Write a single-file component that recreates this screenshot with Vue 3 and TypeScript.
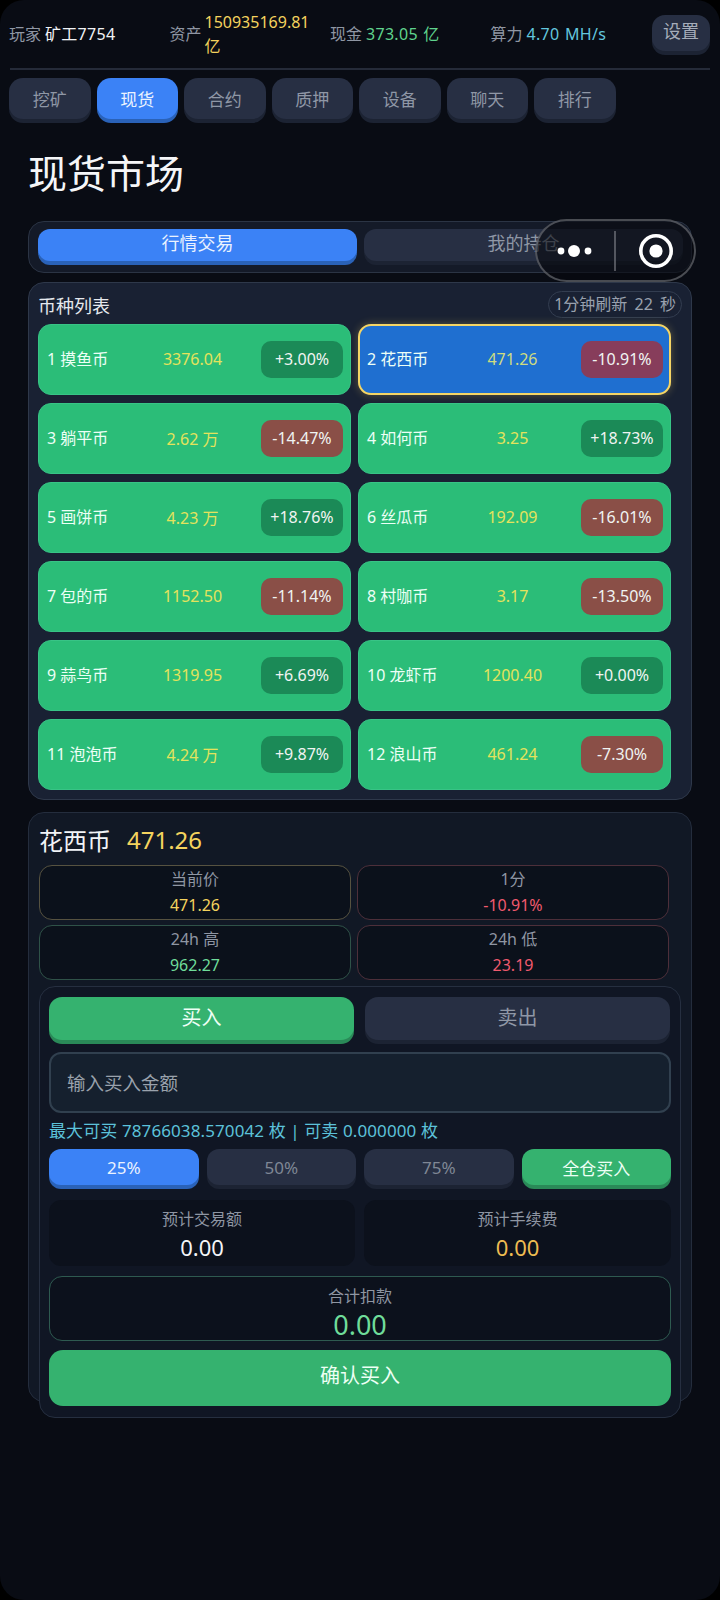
<script setup lang="ts">
import { ref } from "vue";

interface Coin {
    id: number;
    name: string;
    price: string;
    change: string;
}

const navs = ["挖矿", "现货", "合约", "质押", "设备", "聊天", "排行"];
const pcts = ["25%", "50%", "75%"];
const amount = ref("");

const coins: Coin[] = [
    { id: 1, name: "摸鱼币", price: "3376.04", change: "+3.00%" },
    { id: 2, name: "花西币", price: "471.26", change: "-10.91%" },
    { id: 3, name: "躺平币", price: "2.62 万", change: "-14.47%" },
    { id: 4, name: "如何币", price: "3.25", change: "+18.73%" },
    { id: 5, name: "画饼币", price: "4.23 万", change: "+18.76%" },
    { id: 6, name: "丝瓜币", price: "192.09", change: "-16.01%" },
    { id: 7, name: "包的币", price: "1152.50", change: "-11.14%" },
    { id: 8, name: "村咖币", price: "3.17", change: "-13.50%" },
    { id: 9, name: "蒜鸟币", price: "1319.95", change: "+6.69%" },
    { id: 10, name: "龙虾币", price: "1200.40", change: "+0.00%" },
    { id: 11, name: "泡泡币", price: "4.24 万", change: "+9.87%" },
    { id: 12, name: "浪山币", price: "461.24", change: "-7.30%" },
];
const selected = ref(2);
</script>

<template>
    <div class="screen">
        <header class="top">
            <div class="stats">
                <div class="stat"><span class="lab">玩家</span><span class="val white">矿工7754</span></div>
                <div class="stat"><span class="lab">资产</span><span class="val yellow wrap">150935169.81 亿</span></div>
                <div class="stat"><span class="lab">现金</span><span class="val green">373.05 亿</span></div>
                <div class="stat"><span class="lab">算力</span><span class="val cyan">4.70 MH/s</span></div>
            </div>
            <button class="setting">设置</button>
        </header>

        <nav class="nav">
            <button v-for="n in navs" :key="n" class="nav_btn" :class="{ on: n === '现货' }">{{ n }}</button>
        </nav>

        <h1 class="title">现货市场</h1>

        <section class="seg">
            <button class="seg_btn on">行情交易</button>
            <button class="seg_btn">我的持仓</button>
        </section>

        <section class="list">
            <div class="list_head">
                <span>币种列表</span>
                <span class="timer">1分钟刷新 22 秒</span>
            </div>
            <div class="coins">
                <div v-for="c in coins" :key="c.id" class="coin" :class="{ sel: c.id === selected }">
                    <span class="coin_name">{{ c.id }} {{ c.name }}</span>
                    <span class="coin_price">{{ c.price }}</span>
                    <span class="coin_badge" :class="c.change[0] === '-' ? 'down' : 'up'">{{ c.change }}</span>
                </div>
            </div>
        </section>

        <section class="detail">
            <div class="detail_head"><span>花西币</span><span class="detail_price">471.26</span></div>
            <div class="boxes">
                <div class="box b_yellow"><span>当前价</span><b class="yellow">471.26</b></div>
                <div class="box b_red"><span>1分</span><b class="red">-10.91%</b></div>
                <div class="box b_green"><span>24h 高</span><b class="lgreen">962.27</b></div>
                <div class="box b_red"><span>24h 低</span><b class="red">23.19</b></div>
            </div>

            <div class="trade">
                <div class="sides">
                    <button class="side buy">买入</button>
                    <button class="side">卖出</button>
                </div>
                <input v-model="amount" class="amount" type="text" placeholder="输入买入金额" />
                <div class="tip">最大可买 78766038.570042 枚 | 可卖 0.000000 枚</div>
                <div class="pcts">
                    <button v-for="(p, i) in pcts" :key="p" class="pct" :class="{ on: i === 0 }">{{ p }}</button>
                    <button class="pct all">全仓买入</button>
                </div>
                <div class="ests">
                    <div class="est"><span>预计交易额</span><b>0.00</b></div>
                    <div class="est"><span>预计手续费</span><b class="orange">0.00</b></div>
                </div>
                <div class="total"><span>合计扣款</span><b>0.00</b></div>
                <button class="confirm">确认买入</button>
            </div>
        </section>

        <div class="capsule">
            <svg class="capsule_more" width="44" height="16" viewBox="0 0 44 16">
                <circle cx="7" cy="8" r="3.4" fill="#fff" />
                <circle cx="20" cy="8" r="6" fill="#fff" />
                <circle cx="34" cy="8" r="3.4" fill="#fff" />
            </svg>
            <i class="capsule_line"></i>
            <svg class="capsule_rec" width="36" height="36" viewBox="0 0 36 36">
                <circle cx="18" cy="18" r="15.2" fill="none" stroke="#fff" stroke-width="3.6" />
                <circle cx="18" cy="18" r="6.6" fill="#fff" />
            </svg>
        </div>
    </div>
</template>

<style>
html, body {
    margin: 0;
    background: #000;
}
</style>

<style scoped>
* {
    box-sizing: border-box;
}
button {
    font-family: inherit;
    border: none;
    padding: 0;
}
.screen {
    position: relative;
    width: 720px;
    height: 1600px;
    overflow: hidden;
    border-radius: 24px;
    background: #090c14;
    color: #fff;
    font-family: "Noto Sans", "Noto Sans CJK SC", sans-serif;
    font-size: 16px;
}

.top {
    display: flex;
    align-items: flex-start;
    height: 70px;
    margin: 0 10px;
    border-bottom: 2px solid #252b39;
}
.stats {
    display: grid;
    grid-template-columns: repeat(4, 160.5px);
    width: 642px;
    height: 68px;
    margin-left: -1px;
    margin-right: 1px;
    align-items: center;
}
.stat {
    display: flex;
    align-items: center;
    gap: 4px;
    padding-right: 46px;
    line-height: 24px;
}
.lab {
    flex: none;
    color: #8f96a3;
}
.val {
    white-space: nowrap;
    word-spacing: 1px;
    letter-spacing: 0.3px;
}
.val.wrap {
    white-space: normal;
    width: 106px;
    margin-left: -1px;
    flex: none;
    letter-spacing: 0;
}
.white { color: #f1f3f6; }
.yellow { color: #f4d35e; }
.green { color: #5fd38d; }
.cyan { color: #63c7de; }
.red { color: #f05a6e; }
.lgreen { color: #6fdc9a; }
.orange { color: #eebc52; }

.setting {
    width: 59px;
    height: 36px;
    margin: 15px 0 0 0;
    padding-bottom: 4px;
    border-radius: 13px;
    background: #272f43;
    box-shadow: 0 4px 0 #1c2333;
    color: #a6adba;
    font-size: 18px;
    line-height: 24px;
}

.nav {
    display: flex;
    gap: 6px;
    margin: 8px 0 0 9px;
}
.nav_btn {
    width: 81.5px;
    height: 41px;
    margin-bottom: 4px;
    border-radius: 14px;
    background: #272f43;
    box-shadow: 0 4px 0 #1c2333;
    color: #8f97a6;
    font-size: 17px;
}
.nav_btn.on {
    background: #3b82f6;
    box-shadow: 0 4px 0 #2a62b8;
    color: #eaf2ff;
}

.title {
    margin: 24px 0 0 28px;
    height: 52px;
    line-height: 52px;
    font-size: 39px;
    font-weight: 400;
    color: #f5f6f8;
}

.seg {
    display: grid;
    grid-template-columns: 319px 319px;
    gap: 7px;
    height: 52px;
    margin: 22px 28px 0;
    padding: 7px 9px;
    border: 1px solid #2b3444;
    border-radius: 16px;
    background: #141a28;
}
.seg_btn {
    height: 32px;
    padding-bottom: 4px;
    border-radius: 12px;
    background: #272f43;
    box-shadow: 0 4px 0 #1c2333;
    color: #8f97a6;
    font-size: 18px;
    line-height: 20px;
}
.seg_btn.on {
    background: #3b82f6;
    box-shadow: 0 4px 0 #2a62b8;
    color: #eaf2ff;
}

.list {
    height: 518px;
    margin: 9px 28px 0;
    padding: 8px 9px;
    border: 1px solid #2e384a;
    border-radius: 16px;
    background: #192133;
}
.list_head {
    display: flex;
    justify-content: space-between;
    align-items: center;
    height: 27px;
    margin-bottom: 6px;
    color: #e6e9ee;
    font-size: 18px;
}
.timer {
    height: 27px;
    padding: 0 5px;
    line-height: 25px;
    border: 1px solid #333d50;
    border-radius: 14px;
    color: #99a1ae;
    font-size: 16px;
    word-spacing: 3px;
}
.coins {
    display: grid;
    grid-template-columns: 313px 313px;
    grid-auto-rows: 71px;
    gap: 8px 7px;
}
.coin {
    display: grid;
    grid-template-columns: 102px 87px 1fr;
    align-items: center;
    padding: 0 7px 0 8px;
    border: 1px solid #38c486;
    border-radius: 13px;
    background: #2bbd78;
}
.coin.sel {
    padding: 0 6px 0 7px;
    border: 2px solid #f5d565;
    background: #1f6fd0;
    box-shadow: 0 0 8px rgba(245, 213, 101, 0.3);
}
.coin_name {
    margin-bottom: 3px;
    white-space: nowrap;
    color: #ecfff6;
    font-size: 16px;
}
.coin_price {
    margin-bottom: 1px;
    text-align: center;
    white-space: nowrap;
    color: #e4e35c;
    font-size: 16px;
}
.coin.sel .coin_price {
    color: #cfdc80;
}
.coin_badge {
    justify-self: end;
    width: 82px;
    height: 37px;
    line-height: 37px;
    text-align: center;
    border-radius: 10px;
    color: #f0f4f2;
    font-size: 16px;
}
.coin_badge.up {
    background: #1b8a57;
}
.coin_badge.down {
    background: rgba(165, 48, 58, 0.78);
}

.detail {
    height: 590px;
    margin: 12px 28px 0;
    padding: 10px;
    border: 1px solid #242d3d;
    border-radius: 16px;
    background: #111825;
}
.detail_head {
    display: flex;
    align-items: center;
    gap: 16px;
    height: 32px;
    font-size: 24px;
    color: #f2f4f7;
}
.detail_price {
    color: #f4d35e;
}
.boxes {
    display: grid;
    grid-template-columns: 312px 312px;
    grid-auto-rows: 55px;
    gap: 5px 6px;
    margin-top: 10px;
}
.box {
    display: flex;
    flex-direction: column;
    align-items: center;
    justify-content: center;
    padding-bottom: 2px;
    border: 1px solid;
    border-radius: 13px;
    background: #0b111b;
    color: #8f96a3;
    line-height: 26px;
    font-size: 16px;
}
.box b {
    font-weight: 400;
}
.b_yellow { border-color: #565240; }
.b_red { border-color: #4d2f3a; }
.b_green { border-color: #2f5248; }

.trade {
    width: 642px;
    height: 432px;
    margin-top: 6px;
    padding: 10px 9px;
    border: 1px solid #262f40;
    border-radius: 16px;
    background: #101624;
}
.sides {
    display: grid;
    grid-template-columns: 305px 305px;
    gap: 11px;
}
.side {
    height: 43px;
    padding-bottom: 2px;
    border-radius: 13px;
    background: #272f43;
    box-shadow: 0 4px 0 #1c2333;
    color: #8f97a6;
    font-size: 20px;
    line-height: 28px;
}
.side.buy {
    background: #35b26f;
    box-shadow: 0 4px 0 #2a8a58;
    color: #edfff5;
}
.amount {
    display: block;
    width: 622px;
    height: 61px;
    margin-top: 12px;
    padding: 0 16px;
    border: 2px solid #31404f;
    border-radius: 12px;
    outline: none;
    background: #15202e;
    color: #fff;
    font-family: inherit;
    font-size: 18.5px;
}
.amount::placeholder {
    color: #9aa2ac;
    opacity: 1;
}
.tip {
    height: 28px;
    margin-top: 4px;
    line-height: 28px;
    white-space: nowrap;
    color: #5cc2da;
    font-size: 17px;
    letter-spacing: 0.1px;
}
.pcts {
    display: grid;
    grid-template-columns: repeat(4, 149.5px);
    gap: 8px;
    margin-top: 4px;
}
.pct {
    height: 36px;
    border-radius: 12px;
    background: #272f43;
    box-shadow: 0 4px 0 #1c2333;
    color: #7f8795;
    font-size: 17px;
}
.pct.on {
    background: #3b82f6;
    box-shadow: 0 4px 0 #2a62b8;
    color: #eaf2ff;
}
.pct.all {
    background: #35b26f;
    box-shadow: 0 4px 0 #2a8a58;
    color: #edfff5;
}
.ests {
    display: grid;
    grid-template-columns: 306px 307px;
    gap: 9px;
    margin-top: 15px;
}
.est {
    display: flex;
    flex-direction: column;
    align-items: center;
    justify-content: center;
    height: 66px;
    padding-bottom: 1px;
    border-radius: 12px;
    background: #0c111c;
    color: #8f96a3;
    font-size: 16px;
    line-height: 28px;
}
.est b {
    font-weight: 400;
    font-size: 22px;
    color: #f4f5f7;
}
.est b.orange {
    color: #eebc52;
}
.total {
    display: flex;
    flex-direction: column;
    align-items: center;
    height: 65px;
    margin-top: 10px;
    padding-top: 7px;
    border: 1px solid #2e5a50;
    border-radius: 13px;
    background: #0c111c;
    color: #8f96a3;
    font-size: 16px;
    line-height: 24px;
}
.total b {
    font-weight: 400;
    font-size: 27px;
    line-height: 34px;
    color: #6fdc9a;
}
.confirm {
    display: block;
    width: 622px;
    height: 56px;
    margin-top: 9px;
    padding-bottom: 4px;
    border-radius: 14px;
    background: #35b26f;
    color: #edfff5;
    font-size: 20px;
    line-height: 28px;
}

.capsule {
    position: absolute;
    top: 219px;
    left: 535px;
    display: flex;
    align-items: center;
    width: 161px;
    height: 63px;
    border: 2px solid rgba(130, 132, 138, 0.55);
    border-radius: 32px;
    background: rgba(6, 8, 14, 0.6);
}
.capsule_more {
    margin-left: 17px;
    flex: none;
}
.capsule_line {
    width: 2px;
    height: 40px;
    margin-left: 16px;
    flex: none;
    background: rgba(150, 152, 158, 0.5);
}
.capsule_rec {
    margin-left: 22px;
    flex: none;
}
</style>
